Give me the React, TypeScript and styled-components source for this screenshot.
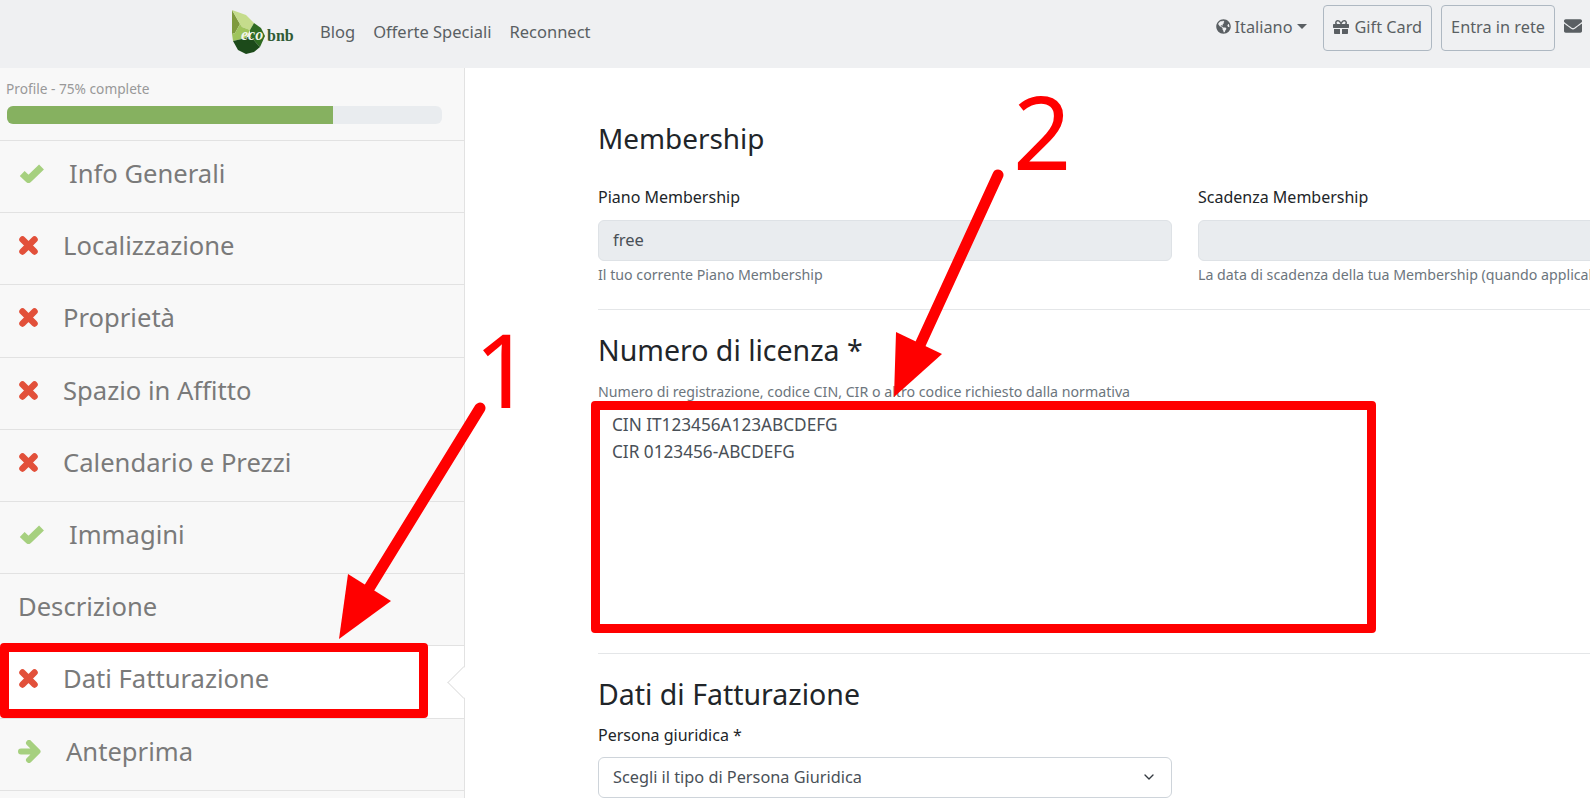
import React from "react";
import styled, { createGlobalStyle } from "styled-components";
import { FaGlobeAmericas, FaGift, FaEnvelope } from "react-icons/fa";
import { FiChevronDown } from "react-icons/fi";

const Global = createGlobalStyle`
  html, body { margin: 0; padding: 0; height: 100%; overflow: hidden; background: #fff; }
  body { font-family: "Noto Sans", "Open Sans", sans-serif; color: #212529; }
  * { box-sizing: border-box; }
`;

const Page = styled.div`
  position: relative;
  width: 1590px;
  height: 798px;
  overflow: hidden;
  display: flex;
  flex-direction: column;
`;

const Header = styled.header`
  height: 68px;
  flex: none;
  background: #eff0f2;
  display: flex;
  align-items: flex-start;
  justify-content: space-between;
  padding: 0 8px 0 232px;
`;
const Left = styled.div`
  display: flex;
  align-items: center;
  height: 64px;
`;
const Nav = styled.nav`
  display: flex;
  gap: 18px;
  margin: -2px 0 0 24px;
`;
const NavLink = styled.a`
  font-size: 16.5px;
  color: #5a5f63;
`;
const Right = styled.div`
  display: flex;
  align-items: center;
  padding-top: 5px;
`;
const Lang = styled.div`
  display: flex;
  align-items: center;
  font-size: 16.3px;
  color: #5a5f63;
  gap: 4px;
  margin-right: 16px;
  margin-top: -3px;
`;
const Caret = styled.span`
  width: 0;
  height: 0;
  border-left: 5px solid transparent;
  border-right: 5px solid transparent;
  border-top: 5px solid #5a5f63;
  margin-left: 1px;
`;
const OutlineButton = styled.div`
  height: 46px;
  display: flex;
  align-items: center;
  gap: 5px;
  padding: 0 9px 2px;
  border: 1px solid #aeb8c2;
  border-radius: 4px;
  font-size: 16.3px;
  color: #5a5f63;
  margin-right: 9px;
`;
const Mail = styled.span`
  display: flex;
  color: #5a5f63;
  font-size: 18px;
  margin-top: -4px;
`;

const Body = styled.div`
  flex: 1;
  display: flex;
  min-height: 0;
`;
const Sidebar = styled.aside`
  width: 465px;
  flex: none;
  background: #f8f8f8;
  border-right: 1px solid #e2e2e2;
`;
const ProgressBlock = styled.div`
  height: 73px;
  padding: 12px 22px 0 7px;
  border-bottom: 1px solid #e2e2e2;
`;
const ProgressLabel = styled.div`
  font-size: 13.7px;
  line-height: 18px;
  color: #999;
  margin-left: -1px;
`;
const Track = styled.div`
  height: 18px;
  margin-top: 8px;
  border-radius: 6px;
  background: #e9ecef;
  overflow: hidden;
`;
const Fill = styled.div`
  height: 100%;
  background: #86b160;
`;
const Row = styled.div<{ $active?: boolean }>`
  position: relative;
  height: 72.2px;
  display: flex;
  align-items: center;
  padding: 0 0 6px 18px;
  font-size: 25.6px;
  color: #7a7a7a;
  border-bottom: 1px solid #e2e2e2;
  background: ${(p) => (p.$active ? "#fff" : "transparent")};
  ${(p) =>
    p.$active &&
    `&::after {
      content: "";
      position: absolute;
      right: -11px;
      top: 25px;
      width: 22px;
      height: 22px;
      background: #fff;
      border-left: 1px solid #e2e2e2;
      border-bottom: 1px solid #e2e2e2;
      transform: rotate(45deg);
    }`}
`;
const IconSvg = styled.svg<{ $lead: number; $gap: number }>`
  flex: none;
  margin-left: ${(p) => p.$lead}px;
  margin-right: ${(p) => p.$gap}px;
`;

const Main = styled.main`
  flex: 1;
  min-width: 0;
  overflow: hidden;
  padding: 48px 0 0 133px;
`;
const Content = styled.div`
  width: 1300px;
`;
const Title = styled.h2`
  margin: 0;
  font-size: 28.5px;
  line-height: 44px;
  font-weight: 400;
  color: #212529;
`;
const FirstTitle = styled(Title)`
  font-size: 27.9px;
`;
const Columns = styled.div`
  display: grid;
  grid-template-columns: 574px 574px;
  gap: 26px;
  margin-top: 25px;
`;
const Label = styled.label`
  display: block;
  font-size: 16px;
  line-height: 24px;
  color: #212529;
`;
const ReadOnlyField = styled.div`
  height: 41px;
  margin-top: 11px;
  padding: 0 14px 2px;
  display: flex;
  align-items: center;
  background: #e9ecef;
  border: 1px solid #dee2e6;
  border-radius: 6px;
  font-size: 16.5px;
  color: #495057;
`;
const Help = styled.small<{ $top?: number }>`
  display: block;
  font-size: 14.2px;
  line-height: 20px;
  color: #6c757d;
  margin-top: ${(p) => p.$top ?? 4}px;
  white-space: nowrap;
`;
const Divider = styled.hr<{ $top: number; $bottom: number }>`
  border: 0;
  border-top: 1px solid #e4e6e8;
  margin: ${(p) => p.$top}px 0 ${(p) => p.$bottom}px;
`;
const TextBox = styled.div`
  width: 774px;
  height: 228px;
  padding: 6px 14px;
  margin-top: 3px;
  font-size: 17.2px;
  line-height: 27px;
  color: #495057;
  white-space: pre-line;
`;
const TightLabel = styled(Label)`
  margin-top: 7px;
`;
const SelectBox = styled.div`
  width: 574px;
  height: 41px;
  margin-top: 10px;
  padding: 0 14px 2px;
  display: flex;
  align-items: center;
  justify-content: space-between;
  background: #fff;
  border: 1px solid #ced4da;
  border-radius: 6px;
  font-size: 16.3px;
  color: #495057;
`;

const Frame = styled.div<{ $x: number; $y: number; $w: number; $h: number }>`
  position: absolute;
  left: ${(p) => p.$x}px;
  top: ${(p) => p.$y}px;
  width: ${(p) => p.$w}px;
  height: ${(p) => p.$h}px;
  border: 9px solid #ff0000;
  border-radius: 4px;
  pointer-events: none;
`;
const Overlay = styled.svg`
  position: absolute;
  left: 0;
  top: 0;
  pointer-events: none;
`;
const Num = styled.span<{ $x: number; $y: number }>`
  position: absolute;
  left: ${(p) => p.$x}px;
  top: ${(p) => p.$y}px;
  font-family: "Noto Sans", sans-serif;
  font-weight: 400;
  font-size: 102px;
  line-height: 102px;
  color: #ff0000;
`;

const Logo = () => (
  <svg width="64" height="44" viewBox="0 0 64 44" aria-hidden="true">
    <polygon points="0,0 8,14 3,23 0,24" fill="#7f9a3d" />
    <polygon points="0,0 14,5 22,13 18,20 10,17 8,14" fill="#c5dc8c" />
    <polygon points="0,24 3,23 8,14 10,17 18,20 14,28 1,31" fill="#9fc45c" />
    <polygon points="22,13 29,18 33,26 28,37 18,26 18,20" fill="#2f6b22" />
    <polygon points="1,31 14,28 18,26 28,37 22,42 14,44 6,40" fill="#1c4a1a" />
    <text x="9" y="30" fontFamily="'Liberation Serif', serif" fontStyle="italic" fontWeight="700" fontSize="16" fill="#f2f5ea">eco</text>
    <text x="35" y="31" fontFamily="'Liberation Serif', serif" fontWeight="700" fontSize="16" fill="#2f5a35">bnb</text>
  </svg>
);

const CheckIcon = () => (
  <IconSvg $lead={1} $gap={25} width="25" height="19" viewBox="0 0 25 19" aria-hidden="true">
    <polyline points="3.2,9.5 9.5,15.5 22.5,3" fill="none" stroke="#a6d07f" strokeWidth="7" strokeLinejoin="round" />
  </IconSvg>
);
const CrossIcon = () => (
  <IconSvg $lead={1} $gap={25} width="19" height="19" viewBox="0 0 19 19" aria-hidden="true">
    <path d="M3.5 3.5L15.5 15.5M15.5 3.5L3.5 15.5" fill="none" stroke="#e2503a" strokeWidth="6.5" strokeLinecap="round" />
  </IconSvg>
);
const NextIcon = () => (
  <IconSvg $lead={0} $gap={25} width="23" height="23" viewBox="0 0 23 23" aria-hidden="true">
    <path d="M3 11.5H19M11 3L19.5 11.5L11 20" fill="none" stroke="#a6d07f" strokeWidth="6" strokeLinecap="round" strokeLinejoin="round" />
  </IconSvg>
);

const steps = [
  { label: "Info Generali", kind: "ok" },
  { label: "Localizzazione", kind: "no" },
  { label: "Proprietà", kind: "no" },
  { label: "Spazio in Affitto", kind: "no" },
  { label: "Calendario e Prezzi", kind: "no" },
  { label: "Immagini", kind: "ok" },
  { label: "Descrizione", kind: "none" },
  { label: "Dati Fatturazione", kind: "no", active: true },
  { label: "Anteprima", kind: "next" },
];

const StepIcon = ({ kind }: { kind: string }) => {
  if (kind === "ok") return <CheckIcon />;
  if (kind === "no") return <CrossIcon />;
  if (kind === "next") return <NextIcon />;
  return null;
};

export default function App() {
  return (
    <Page>
      <Global />
      <Header>
        <Left>
          <Logo />
          <Nav>
            <NavLink>Blog</NavLink>
            <NavLink>Offerte Speciali</NavLink>
            <NavLink>Reconnect</NavLink>
          </Nav>
        </Left>
        <Right>
          <Lang><FaGlobeAmericas size={15} /> Italiano <Caret /></Lang>
          <OutlineButton><FaGift size={16} /> Gift Card</OutlineButton>
          <OutlineButton>Entra in rete</OutlineButton>
          <Mail><FaEnvelope /></Mail>
        </Right>
      </Header>
      <Body>
        <Sidebar>
          <ProgressBlock>
            <ProgressLabel>Profile - 75% complete</ProgressLabel>
            <Track><Fill style={{ width: "75%" }} /></Track>
          </ProgressBlock>
          {steps.map((s) => (
            <Row key={s.label} $active={s.active}>
              <StepIcon kind={s.kind} />
              {s.label}
            </Row>
          ))}
        </Sidebar>
        <Main>
          <Content>
            <FirstTitle>Membership</FirstTitle>
            <Columns>
              <div>
                <Label>Piano Membership</Label>
                <ReadOnlyField>free</ReadOnlyField>
                <Help>Il tuo corrente Piano Membership</Help>
              </div>
              <div>
                <Label>Scadenza Membership</Label>
                <ReadOnlyField />
                <Help>La data di scadenza della tua Membership (quando applicabile)</Help>
              </div>
            </Columns>
            <Divider $top={24} $bottom={18} />
            <Title>Numero di licenza *</Title>
            <Help $top={10}>Numero di registrazione, codice CIN, CIR o altro codice richiesto dalla normativa</Help>
            <TextBox>{"CIN IT123456A123ABCDEFG\nCIR 0123456-ABCDEFG"}</TextBox>
            <Divider $top={20} $bottom={18} />
            <Title>Dati di Fatturazione</Title>
            <TightLabel>Persona giuridica *</TightLabel>
            <SelectBox>
              Scegli il tipo di Persona Giuridica
              <FiChevronDown size={16} color="#343a40" />
            </SelectBox>
          </Content>
        </Main>
      </Body>

      <Frame $x={0} $y={643} $w={428} $h={75} />
      <Frame $x={591} $y={401} $w={785} $h={232} />
      <Overlay width="1590" height="798" viewBox="0 0 1590 798" aria-hidden="true">
        <line x1="480" y1="408" x2="368" y2="590" stroke="#ff0000" strokeWidth="11" strokeLinecap="round" />
        <polygon points="348,574 391,601 339,639" fill="#ff0000" />
        <line x1="998" y1="175" x2="920" y2="345" stroke="#ff0000" strokeWidth="11" strokeLinecap="round" />
        <polygon points="896,332 942,354 894,397" fill="#ff0000" />
      </Overlay>
      <Num $x={474} $y={318}>1</Num>
      <Num $x={1013} $y={80}>2</Num>
    </Page>
  );
}
